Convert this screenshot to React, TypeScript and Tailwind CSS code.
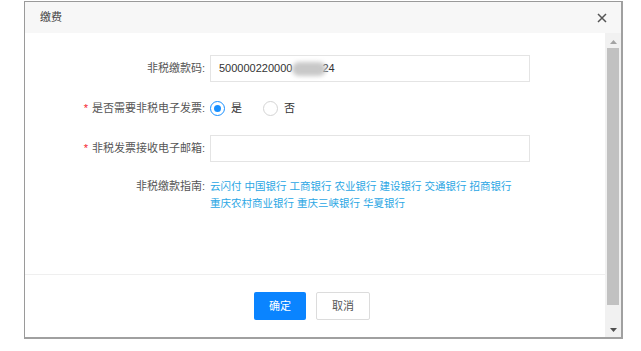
const banks1 = ["云闪付", "中国银行", "工商银行", "农业银行", "建设银行", "交通银行", "招商银行"];
const banks2 = ["重庆农村商业银行", "重庆三峡银行", "华夏银行"];

function Radio({ checked, label }: { checked: boolean; label: string }) {
  return (
    <label className="flex items-center gap-[6px]">
      <span
        className={
          checked
            ? "w-[15px] h-[15px] rounded-full border-[1.5px] border-[#1890ff] flex items-center justify-center"
            : "w-[15px] h-[15px] rounded-full border-[1.5px] border-[#d4d4d4]"
        }
      >
        {checked && <span className="w-[7px] h-[7px] rounded-full bg-[#1890ff]" />}
      </span>
      <span className="text-[#333]">{label}</span>
    </label>
  );
}

function Label({ text, required }: { text: string; required?: boolean }) {
  return (
    <div className="flex items-center justify-end pr-[5px] text-[#555]">
      {required && <span className="text-[#f5222d] mr-[4px]">*</span>}
      {text}
    </div>
  );
}

export default function App() {
  return (
    <div
      className="w-[641px] h-[351px] bg-white pl-[24px] pt-[1px] text-[11px]"
      style={{ fontFamily: '"Liberation Sans", "Noto Sans CJK SC", sans-serif' }}
    >
      <div className="w-[599px] h-[338px] flex flex-col border-l border-t border-[#9a9a9a] border-r-2 border-b-2 border-r-[#a0a0a0] border-b-[#a0a0a0]">
        {/* header */}
        <div className="h-[31px] bg-[#f7f7f7] flex items-center justify-between pl-[15px] pr-[14px]">
          <span className="text-[#444] text-[11px]">缴费</span>
          <svg width="10" height="10" viewBox="0 0 10 10" className="mt-[1px]">
            <path d="M1 1L9 9M9 1L1 9" stroke="#555" strokeWidth="1.5" />
          </svg>
        </div>

        <div className="flex flex-1 min-h-0">
          <div className="flex-1 flex flex-col">
            {/* form */}
            <div className="flex-1 pt-[22px] grid grid-cols-[185px_320px] auto-rows-[27px] gap-y-[13px] content-start">
              <Label text="非税缴款码:" />
              <div className="border border-[#e4e4e4] flex items-center pl-[8px] text-[#333]">
                <span>500000220000</span>
                <span className="inline-block w-[34px] h-[14px] rounded-full bg-[#c8c8c8] blur-[2px] -mr-[4px]" />
                <span>24</span>
              </div>

              <Label text="是否需要非税电子发票:" required />
              <div className="flex items-center gap-[21px]">
                <Radio checked label="是" />
                <Radio checked={false} label="否" />
              </div>

              <Label text="非税发票接收电子邮箱:" required />
              <div className="border border-[#e4e4e4]" />

              <div className="flex justify-end pr-[5px] pt-[3px] text-[#555] leading-[17px] whitespace-nowrap">非税缴款指南:</div>
              <div className="pt-[3px] leading-[17px] text-[10.5px] text-[#2aa6e4] whitespace-nowrap">
                <div className="flex gap-[3px]">
                  {banks1.map((b) => (
                    <a key={b} className="shrink-0">{b}</a>
                  ))}
                </div>
                <div className="flex gap-[3px]">
                  {banks2.map((b) => (
                    <a key={b} className="shrink-0">{b}</a>
                  ))}
                </div>
              </div>
            </div>

            {/* footer */}
            <div className="h-[63px] border-t border-[#efefef] flex items-start justify-center gap-[10px] pt-[17px] pr-[6px]">
              <button className="w-[52px] h-[28px] rounded-[2px] bg-[#0a84ff] text-white">确定</button>
              <button className="w-[54px] h-[28px] rounded-[2px] border border-[#dcdcdc] bg-white text-[#555]">取消</button>
            </div>
          </div>

          {/* scrollbar */}
          <div className="w-[16px] bg-[#f1f1f1] flex flex-col items-center">
            <svg width="7" height="4" viewBox="0 0 7 4" className="mt-[7px]">
              <path d="M0 4L3.5 0L7 4Z" fill="#a3a3a3" />
            </svg>
            <div className="w-[12px] h-[257px] bg-[#c1c1c1] mt-[4px]" />
            <div className="flex-1" />
            <svg width="7" height="4" viewBox="0 0 7 4" className="mb-[5px]">
              <path d="M0 0L3.5 4L7 0Z" fill="#505050" />
            </svg>
          </div>
        </div>
      </div>
    </div>
  );
}
